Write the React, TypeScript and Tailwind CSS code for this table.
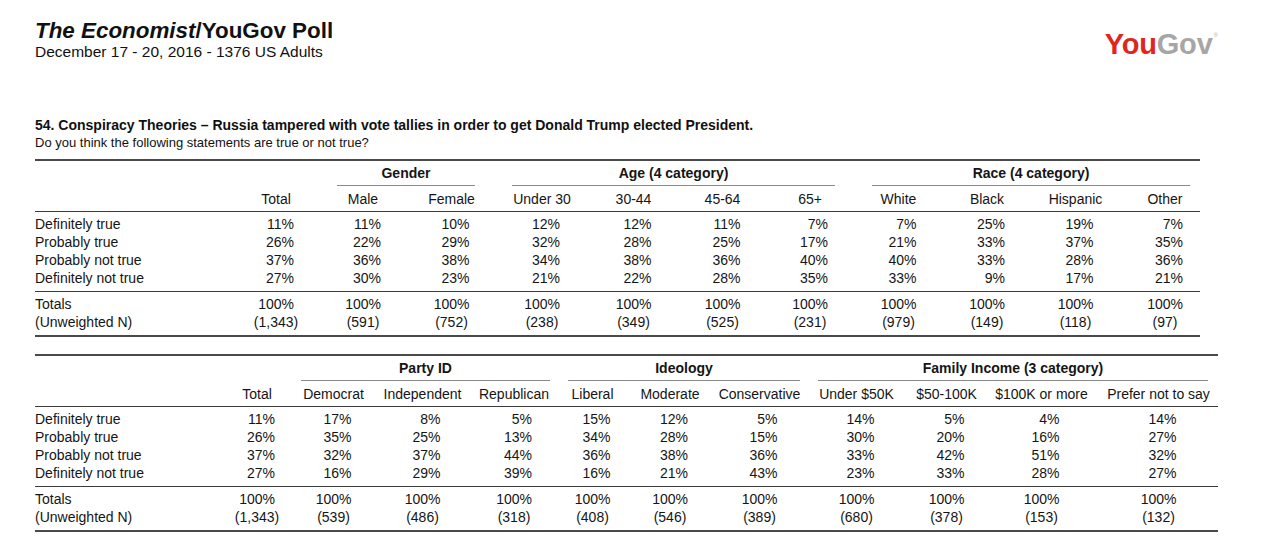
import React from "react";

type Group = { title: string; span: string; inset: string };
type TableSpec = {
  grid: string;
  cols: { label: string; extra?: string }[];
  groups: Group[];
  lead: string;
  rows: { label: string; values: number[] }[];
  ns: string[];
  rule: string;
};

const T1 = "grid grid-cols-[198px_86px_88px_89px_92px_91px_87px_88px_89px_88px_89px_80px]";
const T2 = "grid grid-cols-[184px_76px_82px_91px_86px_77px_83px_94px_93px_91px_107px_119px]";

const labels = ["Definitely true", "Probably true", "Probably not true", "Definitely not true"];

const table1: TableSpec = {
  grid: T1,
  rule: "w-[1165px]",
  lead: "col-span-2",
  cols: [
    { label: "Total" },
    { label: "Male" },
    { label: "Female" },
    { label: "Under 30" },
    { label: "30-44" },
    { label: "45-64" },
    { label: "65+" },
    { label: "White" },
    { label: "Black" },
    { label: "Hispanic" },
    { label: "Other", extra: "pl-[10px]" },
  ],
  groups: [
    { title: "Gender", span: "col-span-2", inset: "ml-[18px] mr-[21px]" },
    { title: "Age (4 category)", span: "col-span-4", inset: "ml-[16px] mr-[19px]" },
    { title: "Race (4 category)", span: "col-span-4", inset: "ml-[18px] mr-[10px]" },
  ],
  rows: [
    { label: labels[0], values: [11, 11, 10, 12, 12, 11, 7, 7, 25, 19, 7] },
    { label: labels[1], values: [26, 22, 29, 32, 28, 25, 17, 21, 33, 37, 35] },
    { label: labels[2], values: [37, 36, 38, 34, 38, 36, 40, 40, 33, 28, 36] },
    { label: labels[3], values: [27, 30, 23, 21, 22, 28, 35, 33, 9, 17, 21] },
  ],
  ns: ["(1,343)", "(591)", "(752)", "(238)", "(349)", "(525)", "(231)", "(979)", "(149)", "(118)", "(97)"],
};

const table2: TableSpec = {
  grid: T2,
  rule: "w-[1183px]",
  lead: "col-span-2",
  cols: [
    { label: "Total" },
    { label: "Democrat", extra: "pr-[5px]" },
    { label: "Independent" },
    { label: "Republican", extra: "pl-[6px]" },
    { label: "Liberal" },
    { label: "Moderate", extra: "pr-[5px]" },
    { label: "Conservative", extra: "pr-[3px]" },
    { label: "Under $50K", extra: "pl-[4px]" },
    { label: "$50-100K" },
    { label: "$100K or more", extra: "pr-[8px]" },
    { label: "Prefer not to say" },
  ],
  groups: [
    { title: "Party ID", span: "col-span-3", inset: "ml-[6px] mr-[4px]" },
    { title: "Ideology", span: "col-span-3", inset: "ml-[14px] mr-[8px]" },
    { title: "Family Income (3 category)", span: "col-span-4", inset: "ml-[10px] mr-[10px]" },
  ],
  rows: [
    { label: labels[0], values: [11, 17, 8, 5, 15, 12, 5, 14, 5, 4, 14] },
    { label: labels[1], values: [26, 35, 25, 13, 34, 28, 15, 30, 20, 16, 27] },
    { label: labels[2], values: [37, 32, 37, 44, 36, 38, 36, 33, 42, 51, 32] },
    { label: labels[3], values: [27, 16, 29, 39, 16, 21, 43, 23, 33, 28, 27] },
  ],
  ns: ["(1,343)", "(539)", "(486)", "(318)", "(408)", "(546)", "(389)", "(680)", "(378)", "(153)", "(132)"],
};

function Pct({ v, extra }: { v: string; extra?: string }) {
  return (
    <div className={"flex justify-center " + (extra ?? "")}>
      <span className="w-[36px] text-right whitespace-nowrap">{v}</span>
    </div>
  );
}

function DataTable({ t }: { t: TableSpec }) {
  return (
    <div className="text-[14px] leading-[18px] text-[#151515]">
      <div className={t.rule + " h-[2px] bg-[#4a4a4a]"} />
      {/* group header */}
      <div className={t.grid + " mt-[3px]"}>
        <div className={t.lead} />
        {t.groups.map((g) => (
          <div key={g.title} className={g.span + " flex flex-col"}>
            <div className={g.inset + " text-center font-bold whitespace-nowrap"}>{g.title}</div>
            <div className={g.inset + " mt-[3px] h-px bg-[#8a8a8a]"} />
          </div>
        ))}
      </div>
      {/* column headers */}
      <div className={t.grid + " mt-[4px]"}>
        <div />
        {t.cols.map((c) => (
          <div key={c.label} className={"text-center whitespace-nowrap " + (c.extra ?? "")}>
            {c.label}
          </div>
        ))}
      </div>
      <div className={t.rule + " mt-[3px] h-px bg-[#3a3a3a]"} />
      <div className="mt-[3px]">
        {t.rows.map((r) => (
          <div key={r.label} className={t.grid}>
            <div className="whitespace-nowrap">{r.label}</div>
            {r.values.map((v, i) => (
              <Pct key={i} v={v + "%"} extra={t.cols[i].extra} />
            ))}
          </div>
        ))}
      </div>
      <div className={t.rule + " mt-[4px] h-px bg-[#3a3a3a]"} />
      <div className="mt-[3px]">
        <div className={t.grid}>
          <div>Totals</div>
          {t.cols.map((c, i) => (
            <Pct key={i} v="100%" extra={c.extra} />
          ))}
        </div>
        <div className={t.grid}>
          <div className="whitespace-nowrap">(Unweighted N)</div>
          {t.ns.map((n, i) => (
            <div key={i} className={"text-center whitespace-nowrap " + (t.cols[i].extra ?? "")}>
              {n}
            </div>
          ))}
        </div>
      </div>
      <div className={t.rule + " mt-[4px] h-[2px] bg-[#4a4a4a]"} />
    </div>
  );
}

export default function App() {
  return (
    <div className="w-[1273px] h-[539px] overflow-hidden bg-white font-['Liberation_Sans',Arial,sans-serif] text-[#111]">
      <div className="pl-[35px]">
        {/* header */}
        <div className="flex w-[1183px] items-start justify-between pt-[19px]">
          <div>
            <div className="text-[22.4px] leading-[24px] font-bold">
              <span className="italic">The Economist</span>/YouGov Poll
            </div>
            <div className="text-[15.5px] leading-[18px]">December 17 - 20, 2016 - 1376 US Adults</div>
          </div>
          <div className="mt-[11px] flex items-start">
            <span className="text-[29px] leading-[29px] font-bold tracking-[-0.2px]">
              <span className="text-[#e0261c]">You</span>
              <span className="text-[#a6a6a6]">Gov</span>
            </span>
            <span className="ml-[1px] mt-[2px] text-[6px] leading-[6px] text-[#b0b0b0]">®</span>
          </div>
        </div>

        {/* question */}
        <div className="mt-[56px] text-[13px] leading-[17px] text-[#111]">
          <div className="text-[14px] font-bold whitespace-nowrap">
            54. Conspiracy Theories – Russia tampered with vote tallies in order to get Donald Trump elected President.
          </div>
          <div className="whitespace-nowrap">Do you think the following statements are true or not true?</div>
        </div>

        <div className="mt-[8px]">
          <DataTable t={table1} />
        </div>
        <div className="mt-[17px]">
          <DataTable t={table2} />
        </div>
      </div>
    </div>
  );
}
